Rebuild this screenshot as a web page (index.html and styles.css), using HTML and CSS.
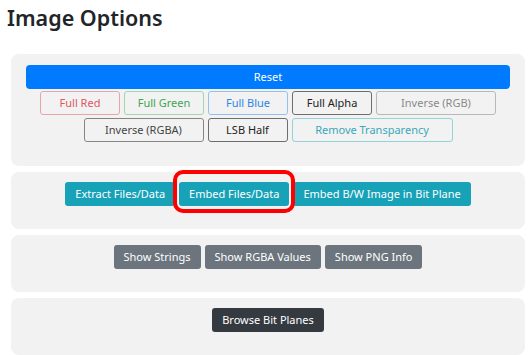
FILE: index.html
```html
<!DOCTYPE html>
<html lang="en">
<head>
    <meta charset="UTF-8">
    <meta name="viewport" content="width=device-width, initial-scale=1.0">
    <title>Image Options</title>
    <link rel="stylesheet" href="styles.css">
</head>
<body>
    <h1 class="title">Image Options</h1>

    <div class="panel panel-main">
        <button class="btn btn-primary btn-block">Reset</button>
        <div class="btn-row">
            <button class="btn btn-outline red w80">Full Red</button>
            <button class="btn btn-outline green w80">Full Green</button>
            <button class="btn btn-outline blue w80">Full Blue</button>
            <button class="btn btn-outline alpha w80">Full Alpha</button>
            <button class="btn btn-outline light w120">Inverse (RGB)</button>
            <button class="btn btn-outline dark w120">Inverse (RGBA)</button>
            <button class="btn btn-outline alpha w80">LSB Half</button>
            <button class="btn btn-outline teal w161">Remove Transparency</button>
        </div>
    </div>

    <div class="panel">
        <div class="btn-row">
            <button class="btn btn-info">Extract Files/Data</button>
            <span class="highlight">
                <button class="btn btn-info">Embed Files/Data</button>
            </span>
            <button class="btn btn-info">Embed B/W Image in Bit Plane</button>
        </div>
    </div>

    <div class="panel">
        <div class="btn-row">
            <button class="btn btn-secondary">Show Strings</button>
            <button class="btn btn-secondary">Show RGBA Values</button>
            <button class="btn btn-secondary">Show PNG Info</button>
        </div>
    </div>

    <div class="panel">
        <div class="btn-row">
            <button class="btn btn-dark">Browse Bit Planes</button>
        </div>
    </div>
</body>
</html>
```

FILE: styles.css
```css
body {
    font-family: "Noto Sans", "Open Sans", sans-serif;
    background-color: #fff;
    color: #212529;
    margin: 0;
    padding: 0 4px 0 6px;
}

.title {
    font-size: 21.5px;
    font-weight: 600;
    margin: 4px 0 22px 1px;
    line-height: 28px;
}

.panel {
    background: #f2f2f2;
    border-radius: 8px;
    margin: 0 0 6px 5px;
    padding: 10px 15px 23px;
}

.panel-main {
    padding-top: 11px;
    padding-bottom: 24px;
}

.btn-row {
    display: flex;
    flex-wrap: wrap;
    justify-content: center;
    gap: 3px 4px;
}

.btn {
    font-family: inherit;
    font-size: 11px;
    line-height: 18px;
    padding: 2px 9px;
    border: 1px solid transparent;
    border-radius: 3px;
    background: transparent;
    cursor: pointer;
    color: #fff;
}

.btn-block {
    display: block;
    width: 100%;
    margin-bottom: 2px;
    border-radius: 4px;
}

.btn-primary { background-color: #007bff; }
.btn-info { background-color: #17a2b8; }
.btn-secondary { background-color: #6c757d; }
.btn-dark { background-color: #343a40; }

.w80 { width: 80px; }
.w120 { width: 120px; }
.w161 { width: 161px; }

.btn-outline.red { color: #de5662; border-color: #eaa3a9; }
.btn-outline.green { color: #3da553; border-color: #a3d6ad; }
.btn-outline.blue { color: #2c85e9; border-color: #93c0f2; }
.btn-outline.alpha { color: #222; border-color: #6e6e6e; }
.btn-outline.light { color: #8a8a8a; border-color: #b8b8b8; }
.btn-outline.dark { color: #444; border-color: #858585; }
.btn-outline.teal { color: #39a8bb; border-color: #93d1db; }

.highlight {
    position: relative;
    display: inline-flex;
}

.highlight::after {
    content: "";
    position: absolute;
    left: -6px;
    right: -6px;
    top: -12px;
    bottom: -7px;
    border: 4px solid #ff0000;
    border-radius: 10px;
    pointer-events: none;
}
```
